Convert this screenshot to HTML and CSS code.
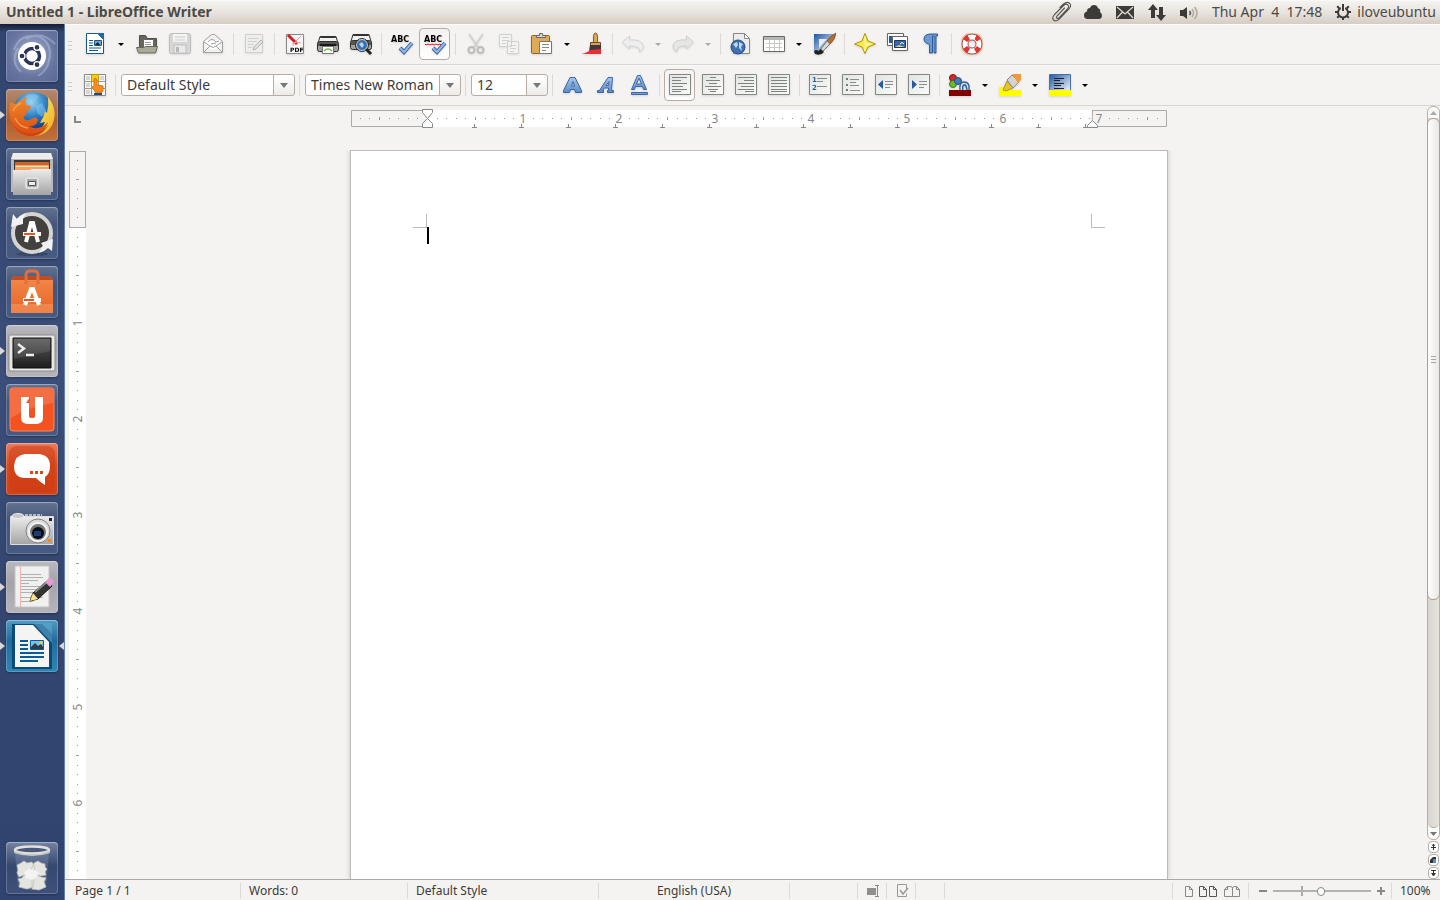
FILE: index.html
```html
<!DOCTYPE html>
<html lang="en">
<head>
<meta charset="utf-8">
<title>Untitled 1 - LibreOffice Writer</title>
<link rel="stylesheet" href="styles.css">
</head>
<body>
<svg class="defs" width="0" height="0" aria-hidden="true">
  <defs>
    <linearGradient id="silver" x1="0" y1="0" x2="0" y2="1"><stop offset="0" stop-color="#ececec"/><stop offset="1" stop-color="#a4a4a4"/></linearGradient>
    <linearGradient id="blue" x1="0" y1="0" x2="0" y2="1"><stop offset="0" stop-color="#a9c6ec"/><stop offset="1" stop-color="#5a8bc9"/></linearGradient>
    <linearGradient id="orange" x1="0" y1="0" x2="0" y2="1"><stop offset="0" stop-color="#f08a4c"/><stop offset="1" stop-color="#ea6424"/></linearGradient>
    <linearGradient id="dark" x1="0" y1="0" x2="0" y2="1"><stop offset="0" stop-color="#5b5b5b"/><stop offset="1" stop-color="#1d1d1d"/></linearGradient>
    <linearGradient id="fade" x1="0" y1="0" x2="1" y2="1"><stop offset="0" stop-color="#1f57a3"/><stop offset="1" stop-color="#ffffff"/></linearGradient>
    <linearGradient id="sheet" x1="0" y1="0" x2="1" y2="1"><stop offset="0" stop-color="#dfe3df"/><stop offset="1" stop-color="#fcfcfb"/></linearGradient>
    <radialGradient id="globe" cx=".45" cy=".25" r=".7"><stop offset="0" stop-color="#9fd6f5"/><stop offset=".5" stop-color="#2f83c7"/><stop offset="1" stop-color="#123c7c"/></radialGradient>
    <linearGradient id="fox" x1="0" y1="0" x2="0" y2="1"><stop offset="0" stop-color="#f08a2c"/><stop offset="1" stop-color="#d94a12"/></linearGradient>
    <linearGradient id="gold" x1="0" y1="0" x2="1" y2="1"><stop offset="0" stop-color="#fff27a"/><stop offset="1" stop-color="#f0a818"/></linearGradient>
  </defs>
</svg>

<header class="panel">
  <h1 class="panel-title">Untitled 1 - LibreOffice Writer</h1>
  <nav class="indicators" aria-label="Indicators">
    <button class="ind" aria-label="Clipboard"><svg width="22" height="22" viewBox="0 0 22 22" fill="none" stroke="#55534f" stroke-width="1.100" stroke-linecap="round"><path d="M14.500 7L7 15Q5.800 16.600 7 17.300Q8 18 9.500 16.500L17.500 8Q19.500 5.500 17.800 3.800Q16 2.300 13.500 4.500L4.500 13.500Q1.500 16.800 3.500 19Q5.800 21.200 9 18.300L19 8Q22 4.500 19.500 2.200Q17 .300 13.500 3L10 6.500"/></svg></button>
    <button class="ind" aria-label="Cloud"><svg width="22" height="22" viewBox="0 0 22 22" fill="#3c3b37"><path d="M5 18Q2 17.500 2 14.500Q2 11 5 10.500Q4.800 7 8 7Q9 4 12 4Q15 4 16 7.200Q18.800 8 18 11Q20 12 20 15Q19.500 18 17 18Z"/></svg></button>
    <button class="ind" aria-label="Messages"><svg width="22" height="22" viewBox="0 0 22 22"><path d="M2 5h18v13H2z" fill="#3c3b37"/><path d="M3 6l8 7 8-7M3 17l5.500-6M19 17l-5.500-6" fill="none" stroke="#ddd7cf" stroke-width="1.300"/></svg></button>
    <button class="ind" aria-label="Network"><svg width="22" height="22" viewBox="0 0 22 22" fill="#3c3b37"><path d="M7 3l5 6H9v8H5V9H2zM15 20l-5-6h3V6h4v8h3z"/></svg></button>
    <button class="ind" aria-label="Sound"><svg width="22" height="22" viewBox="0 0 22 22" fill="none" stroke-width="1.600"><path d="M2 9h3l4-3v12l-4-3H2z" fill="#3c3b37"/><path d="M11.500 10q2 2 0 4" stroke="#5e5c57"/><path d="M14 8q3 4 0 8M16.500 6q5 6 0 12" stroke="#b0aba3"/></svg></button>
    <button class="ind-text">Thu Apr&nbsp; 4&nbsp; 17:48</button>
    <button class="ind-text session"><svg width="18" height="18" viewBox="0 0 18 18" fill="none" stroke="#3c3b37"><path d="M6.700 5A5 5 0 1 0 11.300 5" stroke-width="2"/><path d="M9 1v7" stroke-width="2"/><path d="M9 14v3M4 9H1M14 9h3M5.500 12.500l-2.300 2.300M12.500 12.500l2.300 2.300M5.200 5.200L3.200 3.200M12.800 5.200l2-2" stroke-width="2"/></svg>iloveubuntu</button>
  </nav>
</header>

<div class="desktop">
  <nav class="launcher" aria-label="Launcher">
    <button class="tile dash" aria-label="Dash home"><svg viewBox="0 0 52 52"><path d="M8 20Q14 2 34 7Q47 14 43 30Q42 40 32 46M15 42Q4 32 12 18M20 9Q36 0 49 14" fill="none" stroke="#c5cde5" stroke-opacity=".4" stroke-width="2"/><circle cx="26" cy="26" r="14" fill="#fff"/><circle cx="26" cy="26" r="7.500" fill="none" stroke="#2c3557" stroke-width="3.500"/><g fill="#2c3557" stroke="#fff" stroke-width="1.300"><circle cx="16" cy="26" r="3"/><circle cx="31" cy="17.300" r="3"/><circle cx="31" cy="34.700" r="3"/></g></svg></button>
    <button class="tile firefox running" aria-label="Firefox"><svg viewBox="0 0 52 52"><circle cx="27" cy="23" r="20" fill="url(#globe)"/><path d="M20 7q7-4 13 0l-3 4-5-1-2 4-5-3zM30 17l6-3 4 7-4 7-5-4z" fill="#8ccbed" opacity=".5"/><path d="M42 8Q51 19 48 31Q44 46 27 47Q36 41 39 33L34 34Q38 28 39 22L41 24Q43 16 42 8Z" fill="url(#gold)"/><path d="M5 13Q7 15 10 15Q14 10 22 8Q18 12 20 16L25 17Q26 19 21 22L20 26Q17 27 18 30Q22 33 27 29Q31 28 32 31Q30 38 23 37Q32 43 42 33Q38 47 25 47Q7 46 4 29Q2 19 5 13Z" fill="url(#fox)"/><path d="M5 30Q9 43 24 45Q37 44 43 35Q37 49 22 47Q7 42 5 30Z" fill="#c93c12" opacity=".6"/><path d="M7 22Q9 17 15 14M9 29Q13 38 22 39" fill="none" stroke="#ffb05a" stroke-width="1.500" opacity=".7"/></svg></button>
    <button class="tile glass" aria-label="Files"><svg viewBox="0 0 52 52"><path d="M7 5h38l2 7v32H5V12z" fill="#b8b8b8"/><path d="M7 5h38l2 6H5z" fill="#ededed"/><path d="M8 12h36v11H8z" fill="#3e3834"/><path d="M9 14h34v3H9z" fill="#c8632c"/><path d="M9 17h34v5H9z" fill="#f5a262"/><path d="M10 18h32v1H10z" fill="#ffe0bd"/><path d="M7 22h17l2-1h19v26H7z" fill="url(#silver)"/><rect x="20" y="30" width="12" height="10" rx="2" fill="#a8a8a8" stroke="#dedede" stroke-width="2"/><path d="M22.500 33.500h7v4h-7z" fill="#eee" stroke="#555"/></svg></button>
    <button class="tile glass" aria-label="Software Updater"><svg viewBox="0 0 52 52"><ellipse cx="26" cy="47" rx="16" ry="2" fill="#26334f" opacity=".5"/><circle cx="26" cy="26" r="19" fill="#42413e" stroke="#d4d4d2" stroke-width="4"/><path d="M5 20l2-13 4 5q4-4 9-6l-3 6 0 5-12 3z" fill="#f2f2f0"/><path d="M35 36l12-4-1 12-4-3q-4 4-9 5l4-7z" fill="#f2f2f0"/><path d="M20 35l5-19h2l5 19M17 27h18" fill="none" stroke="#fff" stroke-width="4"/><path d="M18 27h11" stroke="#e95420" stroke-width="2"/></svg></button>
    <button class="tile glass" aria-label="Ubuntu Software Center"><svg viewBox="0 0 52 52"><path d="M5 14l3-4h36l3 4v33H5z" fill="url(#orange)"/><path d="M5 14l3-4h36l3 4z" fill="#bf4d20"/><path d="M20 18v-9q0-4 4-4h4q4 0 4 4v9" fill="none" stroke="#de6f43" stroke-width="3"/><path d="M5 38h42v9H5z" fill="#f6a06c" opacity=".5"/><path d="M19 39l6-16h2l6 16M17 34h18" fill="none" stroke="#fff" stroke-width="4"/><path d="M18 34h10" stroke="#e95420" stroke-width="2"/></svg></button>
    <button class="tile grey running" aria-label="Terminal"><svg viewBox="0 0 52 52"><rect x="3" y="10" width="46" height="36" rx="1" fill="#e7e7e5" stroke="#8b8b8b"/><path d="M7 13h38v30H7z" fill="url(#dark)" stroke="#111"/><path d="M8 14h36v12L8 34z" fill="#fff" opacity=".1"/><path d="M12 19l6 4.500-6 4.500M20 30h8" fill="none" stroke="#eee" stroke-width="2.400"/></svg></button>
    <button class="tile glass" aria-label="Ubuntu One"><svg viewBox="0 0 52 52"><rect x="4" y="4" width="44" height="43" rx="3" fill="#f4521f" stroke="#ff8a5c"/><path d="M5 5h42v14Q24 22 5 34z" fill="#fff" opacity=".16"/><path d="M15 13h8v19q0 2 3 2t3-2V13h8v21q0 6-8 6h-6q-8 0-8-6z" fill="#fff"/><path d="M20 19l4-6v6z" fill="#f4592a"/></svg></button>
    <button class="tile chat running" aria-label="Empathy"><svg viewBox="0 0 52 52"><rect x="3" y="3" width="46" height="46" rx="8" fill="#cc3a12" opacity=".5"/><path d="M19 11h14q11 1 11 12q0 8-5 11v8q-5-3-9-7H19Q8 35 8 23Q9 12 19 11z" fill="#fff"/><path d="M24 28h3v3h-3zM29 28h3v3h-3zM34 28h3v3h-3z" fill="#dd4814"/></svg></button>
    <button class="tile glass" aria-label="Shotwell"><svg viewBox="0 0 52 52"><path d="M4.500 14.500h43v28h-43z" fill="url(#silver)" stroke="#ddd"/><ellipse cx="12" cy="14" rx="6" ry="2.500" fill="#c8c8c8" stroke="#eee"/><path d="M19 13h17" stroke="#b9b9b9" stroke-width="2" stroke-dasharray="3 1"/><circle cx="32" cy="29" r="12" fill="#dcdcdc" stroke="#828282"/><circle cx="32" cy="30" r="9" fill="#777" stroke="#f2f2f2" stroke-width="2"/><circle cx="32" cy="31" r="6" fill="#080c18"/><path d="M28 29h7v5h-7z" fill="#1c3d70"/><path d="M43 16h3v3h-3z" fill="#222"/><path d="M42 37h3v3h-3z" fill="#f28a1d"/></svg></button>
    <button class="tile grey running" aria-label="Text Editor"><svg viewBox="0 0 52 52"><path d="M9 5h34v41H9z" fill="#f0f0ef" stroke="#c5c5c5"/><path d="M14.500 5v41" stroke="#efb4b4"/><path d="M15 13.500h20M15 16.500h22M15 19.500h17M15 22.500h8M15 25.500h20M15 28.500h22M15 31.500h16M15 36.500h22M15 40.500h12" stroke="#b0b0b0"/><path d="M24 40l3-8 14-12 5 5-14 13z" fill="#333" stroke="#111"/><path d="M29 31L42 20" stroke="#8a8a8a" stroke-width="2"/><path d="M24 40l3-8 5 6z" fill="#f6e38c"/><path d="M39 21l4-4q4 0 5 4l-4 5z" fill="#e79ad0"/></svg></button>
    <button class="tile writer running active" aria-label="LibreOffice Writer"><svg viewBox="0 0 52 52"><path d="M6 4h30l10 10v35H6z" fill="#0d4a78"/><path d="M27 3h19v20z" fill="#5fa8cd" opacity=".6"/><path d="M9 5h18l16 17v25H9z" fill="#f4f4f3"/><path d="M14 21h8M14 25h8M14 29h8M14 33h24M14 37h24M14 41h18" stroke="#075d97" stroke-width="2"/><path d="M24.500 20.500h13v9h-13z" fill="#7cc0ec" stroke="#075d97"/><path d="M25 29v-2l4-4 3 3 3-2 2 3v2z" fill="#333b3e"/><circle cx="35" cy="22.500" r="1.500" fill="#f4cf45"/></svg></button>
    <button class="tile trash" aria-label="Trash"><svg viewBox="0 0 52 52"><path d="M9 10l3 35q14 6 28 0l3-35z" fill="#a4b0c8" opacity=".25"/><g fill="#e4e5e1" stroke="#bcbeb9" stroke-width=".7"><path d="M11 23l4-2 3-2 3 2 5-1 3 5-1 5-5 4-5-1-5 2-2-4 1-3zM28 21l4-2 3 2 4 1v3l2 2-2 3 1 3-6 1-5-2-4-4zM12 37l4-1 2-3 6 1 4 4-1 7-6 2-8-2 1-4zM26 35l5-2 4 2 5 1-2 4 2 5-7 3-7-1z"/><path d="M18 30l5-3 5 1 5 2-2 5-5 3-6-2z" fill="#f3f4f1" stroke="none"/></g><ellipse cx="26" cy="8" rx="17" ry="3.500" fill="#4b5a7c" stroke="#e1e1dd" stroke-width="2.500"/><path d="M8 9q18 7 36 0v2q-18 6-36 0z" fill="#c6c8c5"/></svg></button>
  </nav>

  <main class="window">
    <div class="toolbar" role="toolbar" aria-label="Standard">
      <span class="grip"></span>
      <button class="tool" aria-label="New"><svg viewBox="0 0 24 24"><path d="M3.500 1.500h11l6 6v14h-17z" fill="#fff" stroke="#165a8c"/><path d="M14 1h7v7z" fill="#1c6ba1"/><path d="M6 8.500h4M6 11h4M6 13.500h4M6 16h12M6 18.500h9" stroke="#165a8c"/><path d="M11.500 8.500h7v5h-7z" fill="#6fabd8" stroke="#165a8c"/><path d="M12 13l2.500-3 3 3z" fill="#222"/></svg></button>
      <button class="drop wide" aria-label="New options"></button>
      <button class="tool" aria-label="Open"><svg viewBox="0 0 24 24"><path d="M4.500 3.500h6l2 3h9v12h-17z" fill="#66675c" stroke="#50514a"/><path d="M8.500 7.500h10v9h-10z" fill="#fff" stroke="#666"/><path d="M10 10.500h6M10 12.500h6" stroke="#999"/><path d="M1.500 15.500h7l2-1h12l-2 6.500h-17z" fill="#a9aa97" stroke="#686958"/></svg></button>
      <button class="tool off" aria-label="Save"><svg viewBox="0 0 24 24"><rect x="1.500" y="1.500" width="21" height="20" rx="2" fill="#cfcfcf" stroke="#b0b0b0"/><path d="M5 2h14v8H5z" fill="#f3f3f3"/><path d="M7 5h10M7 8h10" stroke="#c5c5c5"/><path d="M6 13h12v8H6z" fill="#e9e9e9" stroke="#b4b4b4"/><path d="M8 15h3v5H8z" fill="#aaa"/></svg></button>
      <button class="tool" aria-label="E-mail document"><svg viewBox="0 0 24 24" fill="#f1f1f0" stroke="#a1a19f"><path d="M2.500 9.500l8-7h3l8 7v11h-19z"/><path d="M5 8h14v6l-7 4-7-4z" fill="#fff" stroke="none"/><path d="M3 20l6-6 3 1.500 3-1.500 6 6M3 10l6 4M21 10l-6 4M7 10q4-5 8 0l3-1M10 12l5-1" fill="none"/></svg></button>
      <span class="sep"></span>
      <button class="tool off" aria-label="Edit file"><svg viewBox="0 0 24 24"><path d="M3.500 2.500h17v18h-17z" fill="#ededec" stroke="#c5c5c5"/><path d="M6 6.500h11M6 9.500h9M6 12.500h6M6 15.500h4" stroke="#c8c8c8"/><path d="M11 18l1-3 7-7 2 2-7 7z" fill="#ddd" stroke="#a5a5a5"/></svg></button>
      <span class="sep"></span>
      <button class="tool" aria-label="Export as PDF"><svg viewBox="0 0 24 24"><path d="M3.500 2.500h17v19h-17z" fill="#f5f5f5" stroke="#888"/><path d="M5 3l9 9" stroke="#e01b1b" stroke-width="3"/><path d="M18 4Q12 9 9 15M9 12q4-3 9-1" fill="none" stroke="#f0a0a0"/><path d="M7 14h13v7H7z" fill="#f8f8f8"/><text x="7" y="20" class="pdf">PDF</text></svg></button>
      <button class="tool" aria-label="Print"><svg viewBox="0 0 24 24"><path d="M4 4.500h16l2 7H2z" fill="#f1f1f0" stroke="#333"/><path d="M5 4h14l1 2H4z" fill="#333"/><rect x="1.500" y="9.500" width="21" height="10" rx="2" fill="#a0a29c" stroke="#333"/><path d="M2 10h20v4H2z" fill="#55574f"/><path d="M4 12h16v2H4z" fill="#181818"/><path d="M6.500 14.500h11v7h-11z" fill="#fff" stroke="#777"/><path d="M8 19q4-4 8 0" stroke="#79b853" fill="none" stroke-width="1.500"/></svg></button>
      <button class="tool" aria-label="Page preview"><svg viewBox="0 0 24 24"><path d="M4 2.500h16l2 7H2z" fill="#f1f1f0" stroke="#333"/><path d="M5 2h14l1 2H4z" fill="#333"/><rect x="1.500" y="8.500" width="21" height="9" rx="2" fill="#a0a29c" stroke="#333"/><path d="M2 9h20v4H2z" fill="#55574f"/><path d="M17 17l5 5" stroke="#222" stroke-width="3"/><circle cx="13" cy="13" r="5.500" fill="#3971af" stroke="#d3d7cf" stroke-width="1"/><circle cx="13" cy="13" r="6.500" fill="none" stroke="#252a35"/><path d="M10 12l3-2 2 3-2 3z" fill="#b9d3ef"/></svg></button>
      <span class="sep"></span>
      <button class="tool" aria-label="Spelling and grammar"><svg viewBox="0 0 24 24"><text x="1" y="10" class="abc">ABC</text><path d="M10 16l4 4 8-9" fill="none" stroke="#3a659f" stroke-width="4"/><path d="M10 16l4 4 8-9" fill="none" stroke="#94b8e8" stroke-width="2"/></svg></button>
      <button class="tool pressed" aria-label="Auto spellcheck" aria-pressed="true"><svg viewBox="0 0 24 24"><text x="1" y="10" class="abc">ABC</text><path d="M2 12l1 1 2-1 2 1 2-1 2 1 2-1 2 1 2-1 1 1" fill="none" stroke="#d01818"/><path d="M10 16l4 4 8-9" fill="none" stroke="#3a659f" stroke-width="4"/><path d="M10 16l4 4 8-9" fill="none" stroke="#94b8e8" stroke-width="2"/></svg></button>
      <span class="sep"></span>
      <button class="tool off" aria-label="Cut"><svg viewBox="0 0 24 24" fill="none" stroke="#c9c9c7"><path d="M5 2l9 13M19 2l-9 13" stroke-width="2"/><circle cx="7.500" cy="18" r="3" stroke="#b0b0b0" stroke-width="2"/><circle cx="16.500" cy="18" r="3" stroke="#b0b0b0" stroke-width="2"/></svg></button>
      <button class="tool off" aria-label="Copy"><svg viewBox="0 0 24 24" fill="#f3f3f2" stroke="#c9c9c7"><path d="M2.500 2.500h12v12h-12zM10.500 9.500h11v12h-11z"/><path d="M5 5.500h7M5 8.500h7M5 11.500h4M13 13.500h6M13 16.500h6M13 19.500h4"/></svg></button>
      <button class="tool" aria-label="Paste"><svg viewBox="0 0 24 24"><rect x="1.500" y="3.500" width="18" height="18" rx="1" fill="#dfa95a" stroke="#946421"/><path d="M6.500 5.500v-2h3v-2h3v2h3v2z" fill="#d7d7d5" stroke="#666"/><path d="M9.500 9.500h12v12h-12z" fill="#fff" stroke="#777"/><path d="M12 12.500h7M12 15.500h7M12 18.500h4" stroke="#888"/></svg></button>
      <button class="drop" aria-label="Paste options"></button>
      <button class="tool" aria-label="Format paintbrush"><svg viewBox="0 0 24 24"><path d="M13.500 10.500V5q0-4 2-4t2 4v5.500z" fill="#e2a656" stroke="#925f24"/><path d="M10.500 10.500h10v3h-10z" fill="#d6a35c" stroke="#6b4a24"/><path d="M10 13h11v7H9z" fill="#40383a"/><path d="M1 22q6-1 9-4l11-1v5z" fill="#e62f35"/></svg></button>
      <span class="sep"></span>
      <button class="tool off" aria-label="Undo"><svg viewBox="0 0 24 24"><path d="M1.500 10l7-6v4q12-1 14 6 0 4-4 6 2-6-10-6v3z" fill="#eee" stroke="#cacac8"/></svg></button>
      <button class="drop dim" aria-label="Undo history"></button>
      <button class="tool off" aria-label="Redo"><svg viewBox="0 0 24 24"><path d="M22.500 10l-7-6v4Q3 7 2 14q0 4 4 6-2-6 9.500-6v3z" fill="#e3e3e2" stroke="#c5c5c3"/></svg></button>
      <button class="drop dim" aria-label="Redo history"></button>
      <span class="sep"></span>
      <button class="tool" aria-label="Hyperlink"><svg viewBox="0 0 24 24"><path d="M4.500 1.500h11l5 5v15h-16z" fill="#ececeb" stroke="#888"/><path d="M15.500 1.500v5h5z" fill="#fff" stroke="#888"/><circle cx="9" cy="15" r="7" fill="#3f70b0" stroke="#234a82"/><path d="M4 12l4-2 1 3-2 3zM10 10l4 2-2 3 1 4-3-3z" fill="#c3d8f0"/></svg></button>
      <button class="tool" aria-label="Table"><svg viewBox="0 0 24 24"><path d="M1.500 4.500h21v15h-21z" fill="#fff" stroke="#686a66"/><path d="M2 5h20v3H2z" fill="#b5b7b2"/><path d="M4 11.500h16M4 15.500h16M7.500 8v11M12.500 8v11M17.500 8v11" stroke="#c5c8c3"/></svg></button>
      <button class="drop" aria-label="Table options"></button>
      <button class="tool" aria-label="Show draw functions"><svg viewBox="0 0 24 24"><path d="M2 2h20L8 21H2z" fill="url(#fade)"/><path d="M7 7h8l-8 9z" fill="#e5eefa"/><path d="M24 1Q18 4 15 9l3 3Q23 8 24 1z" fill="#b56f31" stroke="#76401a" stroke-width=".7"/><path d="M15 9l3 3-8 8-2-2z" fill="#d7d7d5" stroke="#777"/><path d="M2 19q3-2 4 0l3-2 3 3q-3 4-9 2z" fill="#222"/></svg></button>
      <span class="sep"></span>
      <button class="tool" aria-label="Navigator"><svg viewBox="0 0 24 24"><path d="M12 1.500l3 7.500 7.500 3-7.500 3-3 6.500L9 15l-7.500-3L9 9z" fill="#fae94b" stroke="#ad9600"/><path d="M12 4v8h6l-6 2v5" fill="none" stroke="#fffbc0"/></svg></button>
      <button class="tool" aria-label="Gallery"><svg viewBox="0 0 24 24"><path d="M1.500 1.500h16v12h-16z" fill="#fff" stroke="#666"/><path d="M3 4h12v7H3z" fill="#295b9c"/><path d="M6.500 4.500h15v14h-15z" fill="#fff" stroke="#666"/><path d="M8.500 8.500h11v7h-11z" fill="#3568ad" stroke="#1b3766"/><path d="M9 15l4-2 6 2z" fill="#ead25f"/><path d="M14 12q2-3 4 0" stroke="#fff" fill="none"/></svg></button>
      <button class="tool" aria-label="Nonprinting characters"><svg viewBox="0 0 24 24"><path d="M10.500 12.500Q5 11 5 7q0-5 7-5h6.500v2H17v17h-2V4h-1.500v17h-3z" fill="#6e98d1" stroke="#2f5b99"/></svg></button>
      <span class="sep"></span>
      <button class="tool" aria-label="Help"><svg viewBox="0 0 24 24"><rect x="2" y="2" width="20" height="20" rx="6" fill="none" stroke="#ecbb82"/><circle cx="12" cy="12" r="7" fill="none" stroke="#a6554c" stroke-width="7"/><circle cx="12" cy="12" r="7" fill="none" stroke="#fff" stroke-width="5"/><path d="M7 2.500l3 5-3 2.500-4-3zM17 2.500l4 4-4 3-2.500-2.500zM3 17l4-3 3 2.500-3 5zM21 17l-4-3-3 3 3 4.500z" fill="#e13434"/></svg></button>
    </div>

    <div class="toolbar" role="toolbar" aria-label="Formatting">
      <span class="grip"></span>
      <button class="tool" aria-label="Styles and formatting"><svg viewBox="0 0 24 24"><path d="M1.500 1.500h21v21h-21z" fill="#f8f8f7" stroke="#888"/><path d="M8.500 1v22M15.500 1v22M1 8.500h22M1 15.500h22" stroke="#999"/><path d="M3 3h4v4H3zM17 3h4v4h-4zM3 10h4v4H3zM3 17h4v4H3z" fill="#d5d5d3"/><path d="M8.500 1.500h7v7h-7z" fill="#f4cf17" stroke="#b99b00"/><path d="M11 6q2-2 3 1v5l6 1v5l-2 2h-5l-4-6 2-1z" fill="#f58c20" stroke="#dc7410"/><path d="M11 20h8v2h-8z" fill="#1f4d94"/></svg></button>
      <span class="sep"></span>
      <label class="combo combo-style"><select aria-label="Paragraph style"><option>Default Style</option></select></label>
      <span class="sep"></span>
      <label class="combo combo-font"><select aria-label="Font name"><option>Times New Roman</option></select></label>
      <span class="sep"></span>
      <label class="combo combo-size"><select aria-label="Font size"><option>12</option></select></label>
      <span class="sep"></span>
      <button class="tool" aria-label="Bold"><svg viewBox="0 0 24 24"><path d="M2.500 19.500v-2L9 4.500h5l6.500 13v2h-6l-1-3h-4l-1 3zM10.500 13h3L12 8.500z" fill="url(#blue)" stroke="#3a66a8" fill-rule="evenodd"/></svg></button>
      <button class="tool" aria-label="Italic"><svg viewBox="0 0 24 24"><path d="M3.500 19.500v-2h2L14 4.500h4.500l-1 13h2v2h-6v-2h1V15h-4l-2 2.500h1v2zM12 12.500h2.500l.500-4z" fill="url(#blue)" stroke="#3a66a8" fill-rule="evenodd"/></svg></button>
      <button class="tool" aria-label="Underline"><svg viewBox="0 0 24 24"><path d="M4.500 16.500l6-14h3l6 14h-3l-1-3h-7l-1 3zM9.500 11h5L12 5z" fill="url(#blue)" stroke="#3a66a8" fill-rule="evenodd"/><path d="M4.500 19.500h16v2h-16z" fill="#7aa1d5" stroke="#3a66a8"/></svg></button>
      <span class="sep"></span>
      <button class="tool pressed" aria-label="Align left" aria-pressed="true"><svg viewBox="0 0 24 24"><path d="M1.500 1.500h21v20h-21z" fill="url(#sheet)" stroke="#858783"/><path d="M4 4.500h15M4 7.500h9M4 10.500h15M4 13.500h11M4 16.500h15M4 18.500h9" stroke="#80827e"/></svg></button>
      <button class="tool" aria-label="Center"><svg viewBox="0 0 24 24"><path d="M1.500 1.500h21v20h-21z" fill="url(#sheet)" stroke="#858783"/><path d="M9 4.500h6M5 7.500h14M8 10.500h8M4 13.500h16M7 16.500h10M9 18.500h6" stroke="#80827e"/></svg></button>
      <button class="tool" aria-label="Align right"><svg viewBox="0 0 24 24"><path d="M1.500 1.500h21v20h-21z" fill="url(#sheet)" stroke="#858783"/><path d="M4 4.500h16M10 7.500h10M4 10.500h16M7 13.500h13M4 16.500h16M11 18.500h9" stroke="#80827e"/></svg></button>
      <button class="tool" aria-label="Justify"><svg viewBox="0 0 24 24"><path d="M1.500 1.500h21v20h-21z" fill="url(#sheet)" stroke="#858783"/><path d="M4 4.500h16M4 7.500h16M4 10.500h16M4 13.500h16M4 16.500h16M4 18.500h16" stroke="#80827e"/></svg></button>
      <span class="sep"></span>
      <button class="tool" aria-label="Numbering"><svg viewBox="0 0 24 24"><path d="M1.500 1.500h21v20h-21z" fill="url(#sheet)" stroke="#858783"/><text x="4" y="9" class="num">1</text><text x="4" y="17" class="num">2</text><path d="M9 5.500h10M9 8.500h6M9 13.500h10" stroke="#8c8e8a"/></svg></button>
      <button class="tool" aria-label="Bullets"><svg viewBox="0 0 24 24"><path d="M1.500 1.500h21v20h-21z" fill="url(#sheet)" stroke="#858783"/><path d="M5 5h2v2H5zM5 11h2v2H5zM5 16h2v2H5z" fill="#777"/><path d="M9 6.500h9M9 9.500h6M9 12.500h9M9 17.500h10" stroke="#8c8e8a"/></svg></button>
      <button class="tool" aria-label="Decrease indent"><svg viewBox="0 0 24 24"><path d="M1.500 1.500h21v20h-21z" fill="url(#sheet)" stroke="#858783"/><path d="M9 7v9l-5-4.500z" fill="#2458a0"/><path d="M11 8.500h8M11 11.500h8M11 14.500h5" stroke="#8c8e8a"/></svg></button>
      <button class="tool" aria-label="Increase indent"><svg viewBox="0 0 24 24"><path d="M1.500 1.500h21v20h-21z" fill="url(#sheet)" stroke="#858783"/><path d="M5 7v9l5-4.500z" fill="#2458a0"/><path d="M12 8.500h8M12 11.500h8M12 14.500h5" stroke="#8c8e8a"/></svg></button>
      <span class="sep"></span>
      <button class="tool" aria-label="Font color"><svg viewBox="0 0 24 24"><circle cx="5" cy="5" r="3.500" fill="#d42828" stroke="#811"/><circle cx="5" cy="11" r="3.500" fill="#68bf2c" stroke="#337a11"/><circle cx="10" cy="8" r="3.500" fill="#477ab8" stroke="#244e8a"/><path d="M12 17q-1-8 4-8 6 0 5 8M15 17q-1-4 1-5t3 5" fill="none" stroke="#315f9e" stroke-width="1.500"/><path d="M1 17h22v6H1z" fill="#810000"/></svg></button>
      <button class="drop" aria-label="Font color options"></button>
      <button class="tool" aria-label="Highlighting"><svg viewBox="0 0 24 24"><path d="M1 14h4v3h18v6H1z" fill="#ff0"/><path d="M5 17l4-9 6 7-7 3z" fill="#e4c52a" stroke="#b39211"/><path d="M9 7l5-5 7 7-6 6z" fill="#d4d4d1" stroke="#888"/><path d="M14 1h9v6l-3 3z" fill="#f09a3a"/></svg></button>
      <button class="drop" aria-label="Highlighting options"></button>
      <button class="tool" aria-label="Background color"><svg viewBox="0 0 24 24"><path d="M1.500 1.500h21v18h-21z" fill="url(#fade)" stroke="#4770a5"/><path d="M6 5.500h10M6 7.500h6M6 10.500h10M6 12.500h7M6 15.500h10" stroke="#222"/><path d="M1 17h22v6H1z" fill="#ff0"/></svg></button>
      <button class="drop" aria-label="Background color options"></button>
    </div>

    <section class="editor">
      <div class="corner"><svg width="7" height="7" viewBox="0 0 7 7"><path d="M1 0v6h6" fill="none" stroke="#888" stroke-width="2"/></svg></div>
      <div class="ruler-row"><svg id="hruler" class="hruler" width="818" height="20" aria-label="Horizontal ruler"></svg></div>
      <svg id="vruler" class="vruler" aria-label="Vertical ruler"></svg>
      <div class="canvas">
        <article class="page" role="textbox" aria-label="Document" tabindex="0">
          <span class="margin-mark left"></span>
          <span class="margin-mark right"></span>
          <span class="caret"></span>
        </article>
      </div>
      <aside class="scroll">
        <div class="scrollbar">
          <button class="arrow" aria-label="Scroll up"><svg width="7" height="4" viewBox="0 0 7 4"><path d="M0 4h7L3.500 0z" fill="#aaa"/></svg></button>
          <div class="trough"><div class="thumb"><i></i><i></i><i></i></div></div>
          <button class="arrow" aria-label="Scroll down"><svg width="7" height="4" viewBox="0 0 7 4"><path d="M0 0h7L3.500 4z" fill="#777"/></svg></button>
        </div>
        <button class="jump" aria-label="Previous page"><svg width="5" height="6" viewBox="0 0 5 6"><path d="M2 0h1l1 2H3v1h2v1H3v2H2V4H0V3h2V2H1z" fill="#333"/></svg></button>
        <button class="jump" aria-label="Navigation"><svg width="7" height="7" viewBox="0 0 7 7"><path d="M0 6V3l3-3h3v2L4 6z" fill="#333"/><path d="M3 2h3v4H3z" fill="#4a94c4"/></svg></button>
        <button class="jump" aria-label="Next page"><svg width="5" height="6" viewBox="0 0 5 6"><path d="M0 0h5v1H3v2h2L3 6H2L0 3h2V1H0z" fill="#333"/></svg></button>
      </aside>
    </section>

    <footer class="status">
      <span class="cell pages">Page 1 / 1</span>
      <span class="cell words">Words: 0</span>
      <span class="cell style">Default Style</span>
      <span class="cell lang">English (USA)</span>
      <span class="cell insert"></span>
      <span class="cell small"><svg width="14" height="14" viewBox="0 0 14 14"><path d="M1 4h9v7H1z" fill="#8f8f8d"/><path d="M9 1.500h4M11.500 1v11M9 12.500h4" stroke="#888" fill="none"/></svg></span>
      <span class="cell small"><svg width="14" height="14" viewBox="0 0 14 14" fill="none" stroke="#999"><path d="M11.500 5V.500h-9v12h9v-3"/><path d="M5 6l3 4 5-6" stroke-width="1.500"/></svg></span>
      <span class="cell small"></span>
      <span class="cell fill"></span>
      <span class="cell views">
        <button aria-label="Single page"><svg width="8" height="11" viewBox="0 0 8 11" fill="none" stroke="#888"><path d="M.500.500h4l3 3v7h-7zM4.500.500v3h3"/></svg></button>
        <button aria-label="Multiple pages"><svg width="19" height="11" viewBox="0 0 19 11" fill="none" stroke="#555"><path d="M.500.500h4l3 3v7h-7zM4.500.500v3h3M10.500.500h4l3 3v7h-7zM14.500.500v3h3"/></svg></button>
        <button aria-label="Book view"><svg width="17" height="11" viewBox="0 0 17 11" fill="none" stroke="#888"><path d="M8.500 10.500h-8v-7l3-3h3q2 0 2 2zM8.500 10.500h7v-7l-3-3h-2q-2 0-2 2zM3.500.500v3h-3M12.500.500v3h3"/></svg></button>
      </span>
      <span class="cell zoom">
        <button aria-label="Zoom out"><svg width="8" height="8" viewBox="0 0 8 8"><path d="M0 3h8v2H0z" fill="#888"/></svg></button>
        <span class="slider"><input type="range" min="0" max="100" value="49" aria-label="Zoom"></span>
        <button aria-label="Zoom in"><svg width="8" height="8" viewBox="0 0 8 8"><path d="M0 3h3V0h2v3h3v2H5v3H3V5H0z" fill="#888"/></svg></button>
      </span>
      <span class="percent">100%</span>
    </footer>
  </main>
</div>
<script src="rulers.js"></script>
</body>
</html>
```

FILE: styles.css
```css
* { box-sizing: border-box; }

body {
  margin: 0;
  height: 100vh;
  display: flex;
  flex-direction: column;
  overflow: hidden;
  background: #f4f3f2;
  color: #3c3b37;
  font-family: "Noto Sans", "Open Sans", sans-serif;
  font-size: 12px;
}

button {
  margin: 0;
  padding: 0;
  border: 0;
  background: none;
  color: inherit;
  font: inherit;
}

svg { display: block; flex: none; }
.defs { position: absolute; }

/* Top panel */
.panel {
  flex: none;
  height: 24px;
  padding: 0 4px 1px 6px;
  display: flex;
  align-items: center;
  justify-content: space-between;
  background: linear-gradient(#f5f3f0, #e8e3dd 50%, #d5cdc4);
  border-top: 1px solid #f9f8f7;
  color: #4c4a46;
}
.panel-title { margin: 0; font-size: 14px; line-height: 20px; font-weight: 700; }
.indicators { display: flex; align-items: center; }
.ind { width: 32px; display: flex; justify-content: center; }
.ind-text { margin-left: 7px; font-size: 14px; line-height: 20px; display: flex; align-items: center; }
.session { margin-left: 12px; gap: 5px; }

.desktop { flex: 1; min-height: 0; display: flex; }

/* Launcher */
.launcher {
  flex: none;
  width: 65px;
  padding: 6px;
  display: flex;
  flex-direction: column;
  gap: 7px;
  background: linear-gradient(#141e35, #31456f 8px, #3a4e79 40%, #33466f 65%, #304471);
  border-right: 1px solid #6580a4;
}
.tile {
  position: relative;
  flex: none;
  width: 52px;
  height: 52px;
  border-radius: 4px;
  box-shadow: inset 0 0 0 1px rgba(255, 255, 255, 0.2), inset 0 1px 1px rgba(255, 255, 255, 0.25), 0 1px 2px rgba(0, 0, 0, 0.3);
}
.dash { background: radial-gradient(circle at 50% 45%, #aeb8d6, #67759f 60%, #5a6896); }
.firefox { background: linear-gradient(#b18a72, #a95f34 60%, #c4713b); }
.glass { background: linear-gradient(#62728f, #44567d 35%, #475a82); }
.grey { background: linear-gradient(#b9b9be, #a3a3a9 40%, #b4b4b9); }
.chat { background: linear-gradient(#ea7a5c, #dc4a1c 45%, #d3411a); }
.writer { background: linear-gradient(#4f9cc2, #1f6c9d 40%, #2f86b4); }
.trash { margin-top: auto; background: linear-gradient(#7583a2, #35486f 45%, #3e517c); }
.running::before,
.active::after {
  content: "";
  position: absolute;
  top: 22px;
  left: -6px;
  border: 4px solid transparent;
  border-left: 5px solid #d8d8d8;
  border-right: 0;
}
.active::after {
  left: auto;
  right: -6px;
  border-left: 0;
  border-right: 5px solid #d8d8d8;
}

/* Writer window */
.window { flex: 1; min-width: 0; display: flex; flex-direction: column; }

.toolbar {
  flex: none;
  height: 41px;
  display: flex;
  align-items: center;
  border-bottom: 1px solid #d9d6d2;
  box-shadow: inset 0 1px #fbfbfa;
}
.grip {
  width: 4px;
  height: 9px;
  margin: 2px 6px 0 3px;
  background: repeating-linear-gradient(#cfccc8 0 1px, transparent 1px 4px);
}
.tool {
  width: 31px;
  height: 32px;
  margin: 0 1px;
  display: flex;
  align-items: center;
  justify-content: center;
  border-radius: 4px;
}
.tool svg { width: 24px; height: 24px; filter: drop-shadow(0 1px 1px rgba(0, 0, 0, 0.12)); }
.tool.off svg { opacity: 0.8; }
.tool.pressed { border: 1px solid #b5aca3; background: linear-gradient(#f4f2f0, #fff); }
.drop { width: 17px; height: 32px; display: flex; align-items: center; justify-content: center; }
.drop::after { content: ""; border: 3px solid transparent; border-top-color: #000; border-bottom: 0; }
.drop.wide { width: 19px; }
.drop.dim::after { border-top-color: #aaa; }
.sep { width: 8px; height: 22px; background: linear-gradient(#dcd9d6, #dcd9d6) center / 1px 100% no-repeat; }
.abc { font: 700 8px "DejaVu Sans", sans-serif; fill: #000; }
.pdf { font: 700 6px "DejaVu Sans", sans-serif; fill: #000; }
.num { font: 700 7px "DejaVu Sans", sans-serif; fill: #2a62a4; }

.combo {
  position: relative;
  height: 22px;
  margin: 0 0 0 2px;
  display: flex;
  border: 1px solid #b6ada5;
  border-radius: 3px;
  background: linear-gradient(90deg, #fff, #fff) left / calc(100% - 21px) 100% no-repeat, linear-gradient(#fff, #eeecea);
}
.combo::before { content: ""; position: absolute; right: 20px; top: 0; bottom: 0; border-left: 1px solid #b6ada5; }
.combo::after { content: ""; position: absolute; right: 6px; top: 8px; border: 4px solid transparent; border-top: 5px solid #777; border-bottom: 0; }
.combo select {
  width: 100%;
  padding: 0 24px 0 5px;
  border: 0;
  appearance: none;
  background: transparent;
  color: #3c3b37;
  font: 14px/20px "Noto Sans", "Open Sans", sans-serif;
}
.combo-style { width: 174px; }
.combo-font { width: 156px; }
.combo-size { width: 77px; }

/* Document area */
.editor {
  flex: 1;
  min-height: 0;
  display: grid;
  grid-template-columns: 21px 1fr 13px;
  grid-template-rows: 44px 1fr;
}
.corner { padding: 10px 0 0 9px; }
.ruler-row, .canvas { padding-left: 5px; display: flex; justify-content: center; min-width: 0; overflow: hidden; }
.hruler { margin-top: 3px; }
.vruler { grid-area: 2 / 1; width: 17px; height: calc(100% - 1px); margin: 1px 0 0 4px; overflow: hidden; background: #fff; }
.ruler-text { font: 12px "Noto Sans", sans-serif; fill: #888; text-anchor: middle; }
.canvas { grid-area: 2 / 2; }
.page {
  position: relative;
  flex: none;
  width: 818px;
  padding: 76px;
  background: #fff;
  border: 1px solid #bdbbb9;
  border-bottom: 0;
  box-shadow: 0 0 5px rgba(0, 0, 0, 0.2);
  outline: 0;
}
.caret { display: block; width: 2px; height: 17px; background: #000; }
.margin-mark { position: absolute; top: 63px; width: 14px; height: 14px; border-bottom: 1px solid #bbb; }
.margin-mark.left { left: 62px; border-right: 1px solid #bbb; }
.margin-mark.right { right: 62px; border-left: 1px solid #bbb; }

.scroll { grid-area: 1 / 3 / 3 / 4; display: flex; flex-direction: column; gap: 1px; }
.scrollbar { flex: 1; display: flex; flex-direction: column; border: 1px solid #b9aea5; border-radius: 6px; background: #fafaf9; }
.arrow { height: 11px; display: flex; align-items: center; justify-content: center; }
.trough { flex: 1; background: linear-gradient(90deg, #d9d4cf, #e6e2dd); border-radius: 0 0 6px 6px; border-bottom: 1px solid #b9aea5; }
.thumb {
  height: 68%;
  margin: 0 -1px;
  display: flex;
  flex-direction: column;
  align-items: center;
  justify-content: center;
  gap: 2px;
  border: 1px solid #a99f96;
  border-radius: 6px;
  background: linear-gradient(90deg, #fff, #e9e6e3);
}
.thumb i { width: 5px; height: 1px; background: #aaa49d; }
.jump { height: 12px; margin: 0 1px; display: flex; align-items: center; justify-content: center; border: 1px solid #b5aca4; border-radius: 4px; background: #fff; }

/* Status bar */
.status {
  flex: none;
  height: 21px;
  padding-top: 2px;
  display: flex;
  align-items: center;
  border-top: 1px solid #aaa9a7;
  line-height: 16px;
  white-space: nowrap;
}
.cell { height: 16px; display: flex; align-items: center; padding-left: 8px; border-right: 1px solid #dcd9d6; }
.pages { width: 176px; padding-left: 10px; }
.words { width: 167px; }
.style { width: 191px; }
.lang { width: 191px; padding: 0; justify-content: center; }
.insert { width: 68px; }
.small { width: 29px; }
.fill { flex: 1; }
.views { width: 76px; padding-left: 12px; gap: 6px; }
.zoom { width: 143px; padding-left: 10px; gap: 6px; }
.percent { width: 48px; padding-left: 8px; }
.slider {
  display: flex;
  width: 98px;
  background: linear-gradient(#aaa, #aaa) 28px center / 2px 10px no-repeat;
}
.slider input { width: 98px; height: 10px; margin: 0; appearance: none; background: linear-gradient(#b2b2b0, #b2b2b0) center / 100% 2px no-repeat; }
.slider input::-webkit-slider-thumb { appearance: none; width: 8px; height: 9px; border: 1px solid #888; border-radius: 4px; background: #fff; }
```

FILE: rulers.js
```javascript
// Draws both rulers: one inch is 96 pixels, with ten divisions to the inch.
const NS = "http://www.w3.org/2000/svg";
const INCH = 96;

function add(parent, name, attrs, text) {
  const el = document.createElementNS(NS, name);
  for (const key in attrs) el.setAttribute(key, attrs[key]);
  if (text) el.textContent = text;
  parent.appendChild(el);
}

function divisions(from, to, draw) {
  for (let i = from; i <= to; i++) {
    if (i !== 0) draw(Math.round(i * INCH / 10), i);
  }
}

const h = document.getElementById("hruler");
const origin = 77;
const end = 742;
add(h, "rect", { x: origin, y: 1, width: end - origin, height: 17, fill: "#fff" });
add(h, "path", { d: `M${origin} 1.5H1.5V17.5H${origin}M${end + 0.5} 1.5H816.5V17.5H${end}Z`, fill: "none", stroke: "#aaa" });
divisions(-7, 76, (offset, i) => {
  const x = origin + offset;
  if (i > 0 && i % 10 === 0) {
    add(h, "text", { x, y: 14, class: "ruler-text" }, String(i / 10));
  } else if (i % 5 === 0) {
    add(h, "rect", { x, y: 8, width: 1, height: 3, fill: "#999" });
  } else {
    add(h, "rect", { x, y: 9, width: 1, height: 1, fill: "#999" });
  }
});
for (let x = origin + 47; x < end; x += 47) {
  add(h, "path", { d: `M${x - 2} 18.5h5M${x + 0.5} 15v3`, stroke: "#888", fill: "none" });
}
add(h, "path", { d: "M72.5.5h10v3l-5 6-5-6zM77.5 9.5l5 5v4h-10v-4z", fill: "#fff", stroke: "#888" });
add(h, "path", { d: "M742.5 11.5l5 5v2h-10v-2z", fill: "#fff", stroke: "#888" });

const v = document.getElementById("vruler");
const top0 = 76;
const visible = Math.floor((v.getBoundingClientRect().height - top0 - 6) * 10 / INCH);
add(v, "rect", { x: 0.5, y: 0.5, width: 16, height: top0, fill: "#f4f3f2", stroke: "#aaa" });
divisions(-7, visible, (offset, i) => {
  const y = top0 + offset;
  if (i > 0 && i % 10 === 0) {
    add(v, "text", { x: 0, y: 0, transform: `translate(13 ${y}) rotate(-90)`, class: "ruler-text" }, String(i / 10));
  } else if (i % 5 === 0) {
    add(v, "rect", { x: 7, y, width: 3, height: 1, fill: "#999" });
  } else {
    add(v, "rect", { x: 8, y, width: 1, height: 1, fill: "#999" });
  }
});
```
